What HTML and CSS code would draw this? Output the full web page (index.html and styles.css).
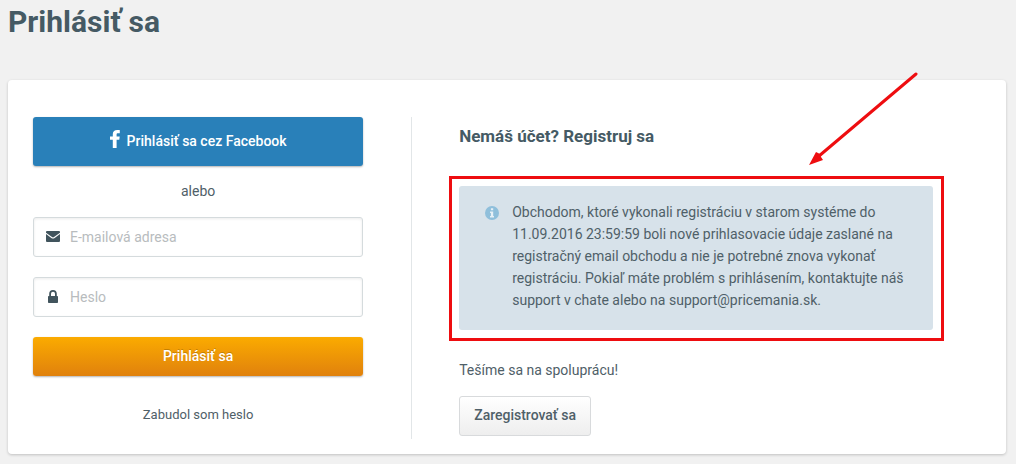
FILE: index.html
```
<!DOCTYPE html>
<html lang="sk">

<head>
    <meta charset="UTF-8">
    <meta name="viewport" content="width=device-width, initial-scale=1.0">
    <title>Prihlásiť sa</title>
    <link rel="stylesheet" href="styles.css">
</head>

<body>

    <h1>Prihlásiť sa</h1>

    <main class="card">
        <section class="login">
            <button type="button" class="btn btn-facebook">
                <svg class="icon-facebook" viewBox="0 0 10 18" aria-hidden="true">
                    <path d="M9.8.15v3.1H8.1c-1.2 0-1.5.5-1.5 1.4v1.8H9.7l-.4 3.4H6.6V18H2.8V9.85H0v-3.4h2.8V4.1C2.8 1.4 4.6 0 7.3 0c1.1 0 2.2.1 2.5.15z" />
                </svg>
                Prihlásiť sa cez Facebook
            </button>

            <p class="or">alebo</p>

            <form>
                <div class="field">
                    <label for="email" aria-label="E-mailová adresa">
                        <svg width="14" height="11" viewBox="0 0 14 11" aria-hidden="true">
                            <path d="M1 0h12a1 1 0 0 1 1 1v.7L8 6.1q-1 .7-2 0L0 1.7V1a1 1 0 0 1 1-1z" />
                            <path d="M0 3.1l5.3 3.9q1.7 1.2 3.4 0L14 3.1V10a1 1 0 0 1-1 1H1a1 1 0 0 1-1-1z" />
                        </svg>
                    </label>
                    <input type="email" id="email" placeholder="E-mailová adresa">
                </div>
                <div class="field">
                    <label for="password" aria-label="Heslo">
                        <svg width="10" height="13" viewBox="0 0 10 13" aria-hidden="true">
                            <path fill-rule="evenodd" d="M1.2 6V3.8a3.8 3.8 0 0 1 7.6 0V6h.4a.8.8 0 0 1 .8.8v5.4a.8.8 0 0 1-.8.8H.8a.8.8 0 0 1-.8-.8V6.8A.8.8 0 0 1 .8 6zM3 6h4V3.8a2 2 0 0 0-4 0z" />
                        </svg>
                    </label>
                    <input type="password" id="password" placeholder="Heslo">
                </div>
                <button type="submit" class="btn btn-login">Prihlásiť sa</button>
            </form>

            <a href="#" class="forgot">Zabudol som heslo</a>
        </section>

        <section class="register">
            <h2>Nemáš účet? Registruj sa</h2>

            <div class="notice">
                <svg class="icon-info" viewBox="0 0 14 14" aria-hidden="true">
                    <circle cx="7" cy="7" r="7" />
                    <path d="M5.9 2.2h2.3v2H5.9zM5 5.4h3.2v4.7H9v1.5H5v-1.5h.9V6.9H5z" />
                </svg>
                <p>Obchodom, ktoré vykonali registráciu v starom systéme do 11.09.2016 23:59:59 boli nové prihlasovacie údaje zaslané na registračný email obchodu a nie je potrebné znova vykonať registráciu. Pokiaľ máte problém s prihlásením, kontaktujte náš support v chate alebo na support@pricemania.sk.</p>
                <svg class="arrow" viewBox="0 0 110 94" aria-hidden="true">
                    <path class="arrow-line" d="M108 2L11 84" />
                    <path class="arrow-head" d="M1 93L8 80L12 82L13 85L15 88z" />
                </svg>
            </div>

            <p>Tešíme sa na spoluprácu!</p>
            <button type="button" class="btn btn-register">Zaregistrovať sa</button>
        </section>
    </main>

</body>

</html>
```
FILE: styles.css
```
* {
    box-sizing: border-box;
}

body {
    font-family: Roboto, "Liberation Sans", sans-serif;
    font-size: 14px;
    line-height: 22px;
    margin: 0;
    padding: 4px 10px 10px 8px;
    background-color: #f1f1f1;
    color: #4f6068;
}

h1,
h2,
p {
    margin: 0;
}

h1 {
    font-size: 30px;
    line-height: 36px;
    font-weight: 700;
    color: #455a64;
    margin-bottom: 40px;
}

h2 {
    font-size: 17px;
    line-height: 24px;
    font-weight: 700;
    color: #455a64;
    margin: 7px 0 38px;
}

.card {
    display: flex;
    padding: 37px 25px 15px;
    background-color: #fff;
    border-radius: 4px;
    box-shadow: 0 1px 3px rgba(0, 0, 0, 0.2);
}

.login {
    width: 40%;
    padding-right: 48px;
    border-right: 1px solid #e2e6e8;
    text-align: center;
}

.register {
    flex: 1;
    padding: 0 48px 0 47px;
}

.btn {
    font-family: inherit;
    font-size: 14px;
    line-height: 22px;
    font-weight: 500;
    border: none;
    border-radius: 3px;
    cursor: pointer;
}

.btn-facebook {
    display: flex;
    align-items: center;
    justify-content: center;
    gap: 7px;
    width: 100%;
    height: 49px;
    padding-bottom: 2px;
    color: #fff;
    background-color: #2980b9;
    box-shadow: 0 1px 2px rgba(0, 0, 0, 0.3);
}

.icon-facebook {
    width: 10px;
    height: 18px;
    margin-bottom: 4px;
    fill: #fff;
}

.or {
    margin: 14px 0 15px;
}

.field {
    display: flex;
    align-items: center;
    height: 40px;
    margin-bottom: 20px;
    border: 1px solid #d5dbdd;
    border-radius: 3px;
    box-shadow: inset 0 1px 3px rgba(0, 0, 0, 0.08);
}

.field label {
    display: flex;
    justify-content: center;
    width: 36px;
    padding: 0 0 2px 2px;
}

.field svg {
    fill: #41545d;
}

.field input {
    flex: 1;
    min-width: 0;
    height: 100%;
    padding: 0;
    border: none;
    outline: none;
    background: none;
    font-family: inherit;
    font-size: 14px;
    color: #455a64;
}

.field input::placeholder {
    color: #b8bcbe;
}

.btn-login {
    display: block;
    width: 100%;
    height: 39px;
    padding-bottom: 3px;
    color: #fff;
    background: linear-gradient(#fbab00, #e0810d);
    text-shadow: 0 -1px 0 rgba(0, 0, 0, 0.2);
    box-shadow: 0 1px 2px rgba(0, 0, 0, 0.3);
}

.forgot {
    display: block;
    margin: 28px 0 13px;
    font-size: 13px;
    color: inherit;
    text-decoration: none;
}

.notice {
    position: relative;
    display: flex;
    align-items: flex-start;
    gap: 13px;
    margin-bottom: 29px;
    padding: 15px 28px 19px 26px;
    background-color: #d7e2ea;
    border-radius: 3px;
}

/* red frame around the notice */
.notice::after {
    content: "";
    position: absolute;
    inset: -10px -11px -11px -10px;
    border: 3px solid #ee0d10;
}

.icon-info {
    flex: none;
    width: 14px;
    height: 14px;
    margin-top: 5px;
    fill: #8fbfdb;
}

.icon-info path {
    fill: #e6f0f6;
}

.arrow {
    position: absolute;
    right: 15px;
    bottom: 100%;
    width: 110px;
    height: 94px;
    margin-bottom: 20px;
}

.arrow-line {
    fill: none;
    stroke: #ee0d10;
    stroke-width: 3;
    stroke-linecap: round;
}

.arrow-head {
    fill: #ee0d10;
}

.btn-register {
    height: 40px;
    margin-top: 15px;
    padding: 0 14px 2px;
    color: #4f6068;
    background: linear-gradient(#fff, #eee);
    border: 1px solid #d8dadc;
}

@media (max-width: 768px) {
    .card {
        flex-direction: column;
    }

    .login {
        width: 100%;
        padding-right: 0;
        border-right: none;
    }

    .register {
        padding: 0;
    }
}
```
